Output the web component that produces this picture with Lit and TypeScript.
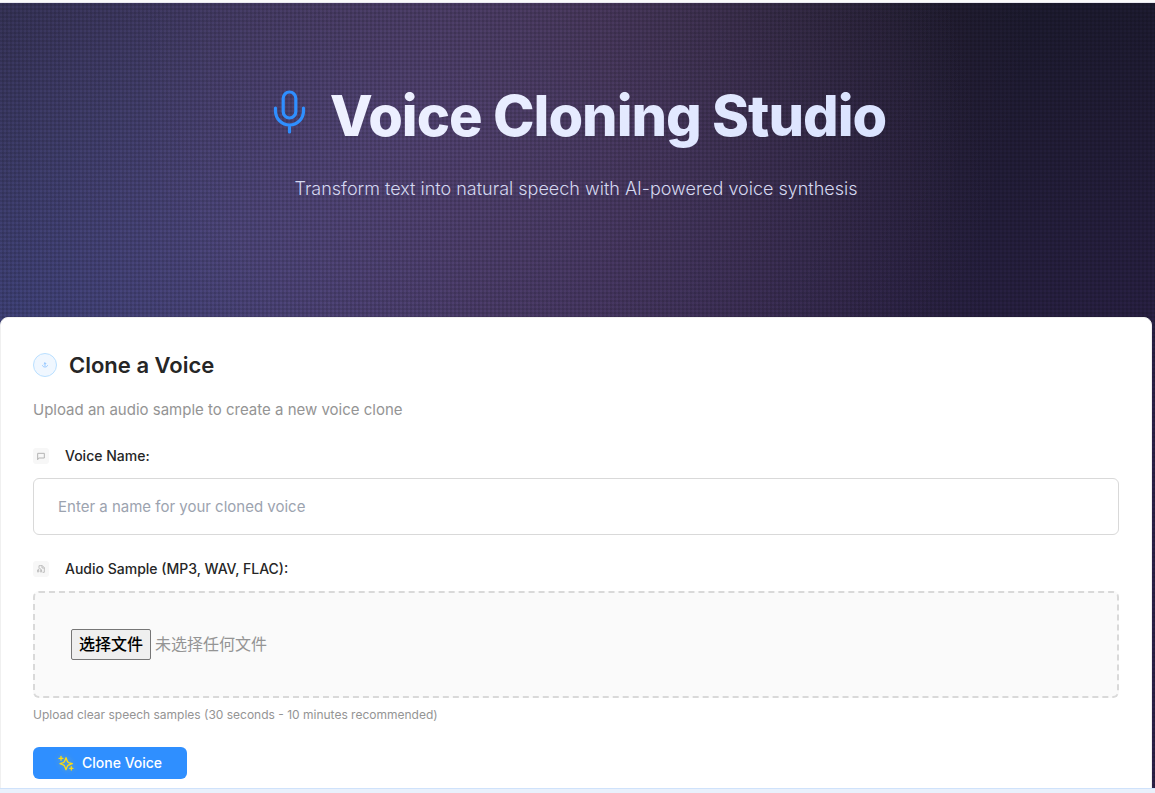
import { LitElement, html, css } from "lit";
import { customElement, state, query } from "lit/decorators.js";

@customElement("app-root")
export class AppRoot extends LitElement {
  @state() private fileName = "";
  @query("#sample") private picker!: HTMLInputElement;

  static styles = css`
    * {
      box-sizing: border-box;
    }
    :host {
      display: flex;
      flex-direction: column;
      height: 100vh;
      overflow: hidden;
      font-family: Inter, "Noto Sans CJK SC", sans-serif;
      color: #262626;
    }
    .topbar {
      flex: none;
      height: 3px;
      background: #fafafa;
      border-bottom: 1px solid #e8e8ee;
    }
    .page {
      flex: 1;
      min-height: 0;
      overflow: hidden;
      padding-right: 3px;
      background:
        repeating-linear-gradient(0deg, transparent 0 2px, rgba(0, 0, 0, 0.1) 2px 4px),
        repeating-linear-gradient(90deg, transparent 0 2px, rgba(0, 0, 0, 0.1) 2px 4px),
        radial-gradient(circle at 35% 14%, rgba(120, 109, 198, 0.3), transparent 560px),
        radial-gradient(ellipse at 50% -10%, rgba(255, 119, 150, 0.11), transparent 460px),
        radial-gradient(circle at 0 45%, rgba(70, 100, 190, 0.36), transparent 480px),
        radial-gradient(circle at 20% 30%, rgba(140, 110, 170, 0.31), transparent 760px),
        linear-gradient(170deg, #1c1b2e 15%, #2c2249 60%);
    }
    .hero {
      display: flex;
      flex-direction: column;
      align-items: center;
      gap: 24px;
      padding: 80px 32px 112px;
      text-align: center;
    }
    .title {
      display: flex;
      align-items: center;
      gap: 16px;
      margin: 0;
      font-size: 56px;
      line-height: 66px;
      font-weight: 800;
      letter-spacing: -1px;
    }
    .title svg {
      width: 48px;
      height: 56px;
      color: #2f8fff;
      stroke-width: 1.6;
    }
    .title span {
      background: linear-gradient(135deg, #f0f2ff, #d9e2ff);
      -webkit-background-clip: text;
      background-clip: text;
      color: transparent;
    }
    .lead {
      margin: 0;
      font-size: 18px;
      line-height: 32px;
      font-weight: 300;
      color: #d5d8f0;
    }
    .card {
      padding: 32px 32px 64px;
      background: #fff;
      border: 1px solid #f0f0f0;
      border-radius: 8px;
    }
    .heading {
      display: flex;
      align-items: center;
      gap: 12px;
      margin: 0;
      font-size: 22px;
      line-height: 30px;
      font-weight: 600;
    }
    .badge {
      display: grid;
      place-items: center;
      width: 24px;
      height: 24px;
      border: 1px solid #bae0ff;
      border-radius: 50%;
      background: #f0f7ff;
      color: #91c5ff;
    }
    .badge svg {
      width: 6px;
      height: 6px;
    }
    .intro {
      margin: 18px 0 24px;
      font-size: 15px;
      line-height: 24px;
      color: #949494;
    }
    .label {
      display: flex;
      align-items: center;
      gap: 16px;
      margin-bottom: 12px;
      font-size: 14px;
      line-height: 20px;
      font-weight: 500;
    }
    .tile {
      display: grid;
      place-items: center;
      width: 16px;
      height: 16px;
      border-radius: 3px;
      background: #f7f7f7;
      color: #b4b4b4;
    }
    .tile svg {
      width: 8px;
      height: 8px;
    }
    .text {
      display: block;
      width: 100%;
      margin-bottom: 24px;
      padding: 16px 24px;
      border: 1px solid #d9d9d9;
      border-radius: 6px;
      background: #fff;
      font: 400 15px/23px Inter, sans-serif;
      color: #262626;
    }
    .text::placeholder {
      color: #9ca3af;
    }
    .drop {
      display: flex;
      align-items: center;
      gap: 4px;
      padding: 36px;
      border: 2px dashed #d9d9d9;
      border-radius: 6px;
      background: #fafafa;
      font: 400 16px/24px "Noto Sans CJK SC", sans-serif;
      color: #949494;
    }
    .drop span {
      padding-bottom: 4px;
    }
    .choose {
      height: 31px;
      padding: 0 7px 4px;
      border: 1px solid #767676;
      border-radius: 2px;
      background: #efefef;
      font: 500 16px/24px "Noto Sans CJK SC", sans-serif;
      color: #000;
    }
    .hint {
      margin: 8px 0 24px;
      font-size: 12px;
      line-height: 17px;
      color: #949494;
    }
    .submit {
      display: flex;
      align-items: center;
      gap: 8px;
      height: 32px;
      padding: 0 25px;
      border: 0;
      border-radius: 6px;
      background: #2f8fff;
      font: 500 14px/20px Inter, sans-serif;
      color: #fff;
    }
    .submit svg {
      width: 16px;
      height: 16px;
      color: #fadb14;
      filter: drop-shadow(0 0 3px rgba(250, 219, 20, 0.35));
    }
    .status {
      flex: none;
      height: 5px;
      background: #e9f1fc;
      border-top: 1px solid #cfe2fb;
    }
    svg {
      display: block;
      fill: none;
      stroke: currentColor;
      stroke-width: 2;
      stroke-linecap: round;
      stroke-linejoin: round;
    }
  `;

  private onFile() {
    this.fileName = this.picker.files?.[0]?.name ?? "";
  }

  render() {
    return html`
      <div class="topbar"></div>
      <main class="page">
        <header class="hero">
          <h1 class="title">
            <svg viewBox="0 0 24 24" preserveAspectRatio="xMidYMin" aria-hidden="true">
              <rect x="8.600" y="2" width="6.300" height="13" rx="3.150" />
              <path d="M18.750 10v1.500a7 7 0 0 1-14 0V10M11.750 18.500V22" />
            </svg>
            <span>Voice Cloning Studio</span>
          </h1>
          <p class="lead">Transform text into natural speech with AI-powered voice synthesis</p>
        </header>
        <section class="card">
          <h2 class="heading">
            <i class="badge">
              <svg viewBox="0 0 24 24" aria-hidden="true">
                <path d="M12 14V4M8 7l4-4 4 4M2 15c2 7 18 7 20 0" stroke-width="4" />
              </svg>
            </i>
            Clone a Voice
          </h2>
          <p class="intro">Upload an audio sample to create a new voice clone</p>
          <label class="label" for="name">
            <i class="tile">
              <svg viewBox="0 0 24 24" aria-hidden="true">
                <path d="M2 22V4h20v14H6z" stroke-width="3" />
              </svg>
            </i>
            Voice Name:
          </label>
          <input id="name" class="text" type="text" placeholder="Enter a name for your cloned voice" />
          <label class="label" for="sample">
            <i class="tile">
              <svg viewBox="0 0 24 24" aria-hidden="true">
                <path
                  d="M6 8V2h10l6 6v14h-4M15 3v6h6M3 18v-2a5 5 0 0 1 10 0v2"
                  stroke-width="2.500"
                />
                <rect x="2" y="16" width="3" height="5" />
                <rect x="11" y="16" width="3" height="5" />
              </svg>
            </i>
            Audio Sample (MP3, WAV, FLAC):
          </label>
          <div class="drop">
            <input id="sample" type="file" accept=".mp3,.wav,.flac" hidden @change=${this.onFile} />
            <button class="choose" type="button" @click=${() => this.picker.click()}>选择文件</button>
            <span>${this.fileName || "未选择任何文件"}</span>
          </div>
          <p class="hint">Upload clear speech samples (30 seconds - 10 minutes recommended)</p>
          <button class="submit" type="button">
            <svg viewBox="0 0 24 24" aria-hidden="true">
              <path
                d="M12 4l2 5.500q.5 1.500 2 2l5.500 1.500-5.500 2q-1.500.5-2 2l-2 5-2-5q-.5-1.500-2-2l-5-2 5-1.500q1.500-.5 2-2zM4.500 2v6M1.500 5h6M20 17.500v5M17.500 20h5"
              />
            </svg>
            Clone Voice
          </button>
        </section>
      </main>
      <div class="status"></div>
    `;
  }
}
